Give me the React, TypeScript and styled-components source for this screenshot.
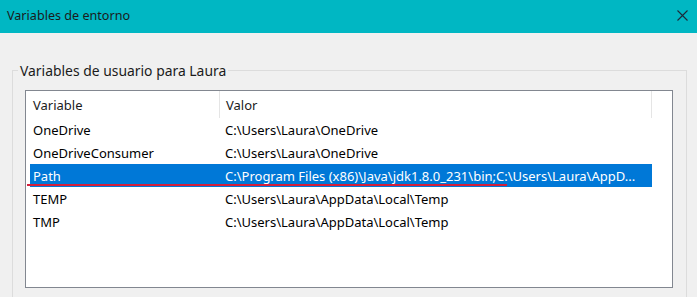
import React from "react";
import styled, { createGlobalStyle } from "styled-components";

const Global = createGlobalStyle`
  html, body { margin: 0; padding: 0; }
  body {
    background: #f0f0f0;
    font-family: "Noto Sans", "Open Sans", sans-serif;
    font-size: 13px;
    color: #000;
    overflow: hidden;
  }
`;

const Window = styled.div`
  width: 697px;
  height: 297px;
  background: #f0f0f0;
  display: flex;
  flex-direction: column;
  overflow: hidden;
`;

const TitleBar = styled.div`
  height: 33px;
  flex: none;
  background: #00b7c3;
  display: flex;
  align-items: center;
  justify-content: space-between;
  padding: 0 9px 2px 7px;
  box-sizing: border-box;
  color: #1b1b1b;
  font-size: 12.6px;
`;

const CloseButton = styled.span`
  display: flex;
  align-items: center;
  justify-content: center;
  width: 11px;
  height: 11px;
`;

const Body = styled.div`
  padding: 28px 10px 0 12px;
  flex: 1;
`;

const Group = styled.fieldset`
  margin: 0;
  padding: 10px 13px 0 12px;
  border: 1px solid #dcdcdc;
  border-bottom: none;
  min-height: 250px;
`;

const Legend = styled.legend`
  padding: 0 2px;
  margin-left: -7px;
  font-size: 13.9px;
  color: #1b1b1b;
`;

const ListBox = styled.div`
  background: #fff;
  border: 1px solid #828790;
  height: 196px;
  padding: 0 20px 0 4px;
`;

const Row = styled.div<{ $header?: boolean; $selected?: boolean }>`
  position: relative;
  display: grid;
  grid-template-columns: 189px 1fr;
  height: ${(p) => (p.$header ? "27px" : "23px")};
  align-items: center;
  background: ${(p) => (p.$selected ? "#0078d7" : "transparent")};
  color: ${(p) => (p.$selected ? "#fff" : "#000")};
  white-space: nowrap;
  ${(p) => (p.$header ? "border-right: 1px solid #e5e5e5;" : "")}
`;

const Cell = styled.div<{ $header?: boolean; $divider?: boolean }>`
  padding-left: ${(p) => (p.$divider ? "6px" : "3px")};
  overflow: hidden;
  height: 100%;
  display: flex;
  align-items: center;
  ${(p) => (p.$header && p.$divider ? "border-left: 1px solid #e5e5e5;" : "")}
  ${(p) => (p.$header ? "color: #1b1b1b;" : "")}
`;

const Underline = styled.div`
  position: absolute;
  left: -3px;
  bottom: 1px;
  width: 480px;
  height: 2px;
  background: #d31f3b;
`;

const rows = [
  ["OneDrive", "C:\\Users\\Laura\\OneDrive"],
  ["OneDriveConsumer", "C:\\Users\\Laura\\OneDrive"],
  ["Path", "C:\\Program Files (x86)\\Java\\jdk1.8.0_231\\bin;C:\\Users\\Laura\\AppD..."],
  ["TEMP", "C:\\Users\\Laura\\AppData\\Local\\Temp"],
  ["TMP", "C:\\Users\\Laura\\AppData\\Local\\Temp"],
];

export default function App() {
  return (
    <Window>
      <Global />
      <TitleBar>
        <span>Variables de entorno</span>
        <CloseButton>
          <svg width="11" height="11" viewBox="0 0 11 11">
            <path d="M0.5 0.5L10.5 10.5M10.5 0.5L0.5 10.5" stroke="#1b2a3a" strokeWidth="1.1" />
          </svg>
        </CloseButton>
      </TitleBar>
      <Body>
        <Group>
          <Legend>Variables de usuario para Laura</Legend>
          <ListBox>
            <Row $header>
              <Cell $header>Variable</Cell>
              <Cell $header $divider>Valor</Cell>
            </Row>
            {rows.map(([name, value]) => (
              <Row key={name} $selected={name === "Path"}>
                <Cell>{name}</Cell>
                <Cell $divider>{value}</Cell>
                {name === "Path" && <Underline />}
              </Row>
            ))}
          </ListBox>
        </Group>
      </Body>
    </Window>
  );
}
